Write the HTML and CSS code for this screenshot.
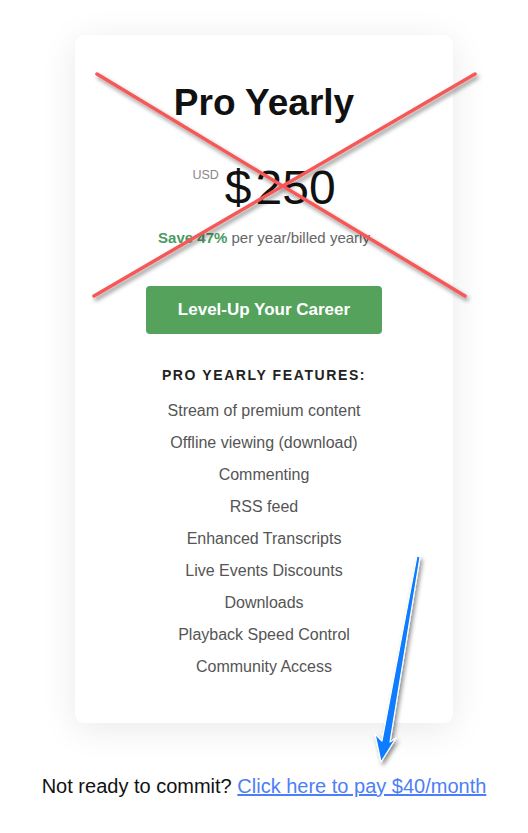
FILE: index.html
```html
<!DOCTYPE html>
<html>
<head>
    <meta charset="utf-8" />
    <meta name="viewport" content="width=device-width, initial-scale=1" />
    <title>Pro Yearly</title>
    <link rel="stylesheet" href="styles.css">
</head>
<body>
    <div class="page">
        <div class="card">
            <h1 class="plan">Pro Yearly</h1>
            <div class="price">
                <span class="currency">USD</span>
                <span class="amount"><span class="dollar">$</span>250</span>
            </div>
            <div class="save"><b>Save 47%</b> per year/billed yearly</div>
            <a class="cta" href="#">Level-Up Your Career</a>
            <div class="features-title">PRO YEARLY FEATURES:</div>
            <ul class="features">
                <li>Stream of premium content</li>
                <li>Offline viewing (download)</li>
                <li>Commenting</li>
                <li>RSS feed</li>
                <li>Enhanced Transcripts</li>
                <li>Live Events Discounts</li>
                <li>Downloads</li>
                <li>Playback Speed Control</li>
                <li>Community Access</li>
            </ul>
        </div>
        <p class="monthly">Not ready to commit? <a href="#">Click here to pay $40/month</a></p>
    </div>

    <svg class="marks" width="528" height="833" viewBox="0 0 528 833">
        <defs>
            <filter id="shadow" x="-20%" y="-20%" width="140%" height="140%">
                <feDropShadow dx="2" dy="3" stdDeviation="2" flood-color="#000" flood-opacity="0.45" />
            </filter>
        </defs>
        <g filter="url(#shadow)" stroke="#f65858" stroke-width="3.5" stroke-linecap="round">
            <line x1="97" y1="74" x2="465" y2="296" />
            <line x1="475" y1="74" x2="94" y2="296" />
        </g>
        <g filter="url(#shadow)">
            <path d="M417 556 L420 557 L390 742 L396 738 L381 762 L375 734 L382 741 Z" fill="#0a7bff" stroke="#fff" stroke-width="1.2" stroke-linejoin="round" />
        </g>
    </svg>
</body>
</html>
```

FILE: styles.css
```css
html, body {
    margin: 0;
    background: #fff;
    font-family: "Liberation Sans", Arial, sans-serif;
}

.page {
    padding-top: 35px;
    display: flex;
    flex-direction: column;
    align-items: center;
}

.card {
    width: 378px;
    height: 688px;
    box-sizing: border-box;
    padding-top: 44px;
    background: #fff;
    border-radius: 9px;
    box-shadow: 0 6px 36px rgba(0, 0, 0, 0.09);
    display: flex;
    flex-direction: column;
    align-items: center;
}

.plan {
    margin: 0;
    font-size: 37px;
    line-height: 48px;
    font-weight: bold;
    color: #111;
}

.price {
    margin-top: 33px;
    display: flex;
    align-items: flex-start;
    height: 56px;
}

.currency {
    margin-top: 8px;
    margin-right: 6px;
    font-size: 12.5px;
    color: #888;
}

.amount {
    font-size: 48px;
    line-height: 56px;
    color: #111;
}

.dollar {
    margin-right: 4px;
}

.save {
    margin-top: 13px;
    font-size: 15px;
    color: #666;
}

.save b {
    color: #4c9a62;
}

.cta {
    margin-top: 40px;
    width: 236px;
    height: 48px;
    display: flex;
    align-items: center;
    justify-content: center;
    background: #55a25d;
    border-radius: 4px;
    color: #fff;
    font-size: 17px;
    font-weight: bold;
    text-decoration: none;
}

.features-title {
    margin-top: 33px;
    font-size: 14px;
    font-weight: bold;
    letter-spacing: 1.6px;
    color: #222;
}

.features {
    list-style: none;
    margin: 12px 0 0;
    padding: 0;
    text-align: center;
}

.features li {
    font-size: 16px;
    line-height: 32px;
    color: #555;
}

.monthly {
    margin: 52px 0 0;
    font-size: 20px;
    color: #111;
}

.monthly a {
    color: #4d7ef7;
}

.marks {
    position: absolute;
    left: 0;
    top: 0;
    pointer-events: none;
}
```
